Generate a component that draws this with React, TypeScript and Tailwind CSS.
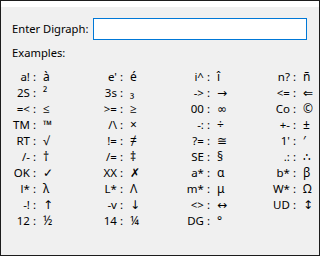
import React from "react";

const items: [string, string][] = [
  ["a!", "à"], ["e'", "é"], ["i^", "î"], ["n?", "ñ"],
  ["2S", "²"], ["3s", "₃"], ["->", "→"], ["<=", "⇐"],
  ["=<", "≤"], [">=", "≥"], ["00", "∞"], ["Co", "©"],
  ["TM", "™"], ["/\\", "×"], ["-:", "÷"], ["+-", "±"],
  ["RT", "√"], ["!=", "≠"], ["?=", "≅"], ["1'", "′"],
  ["/-", "†"], ["/=", "‡"], ["SE", "§"], [".:", "∴"],
  ["OK", "✓"], ["XX", "✗"], ["a*", "α"], ["b*", "β"],
  ["l*", "λ"], ["L*", "Λ"], ["m*", "μ"], ["W*", "Ω"],
  ["-!", "↑"], ["-v", "↓"], ["<>", "↔"], ["UD", "↕"],
  ["12", "½"], ["14", "¼"], ["DG", "°"],
];

const dejavu = new Set(["→", "⇐", "∞", "↑", "↓", "↔", "↕"]);

export default function App() {
  return (
    <div
      className="w-[320px] h-[256px] border border-[#1c1c1c] bg-[#f0f0f0] flex flex-col overflow-hidden text-[11px] text-[#000]"
      style={{ fontFamily: '"Noto Sans", "Open Sans", sans-serif' }}
    >
      <div className="h-[6px] bg-white shrink-0" />
      <div className="flex flex-col pl-[11px] pt-[11px]">
        <div className="flex items-center h-[22px]">
          <div className="w-[81px] leading-[16px] whitespace-nowrap text-[11.2px]">Enter Digraph:</div>
          <div className="w-[214px] h-[22px] border border-[#0078d7] bg-white" />
        </div>
        <div className="mt-[5px] leading-[16px] h-[16px] whitespace-nowrap text-[11.2px]">Examples:</div>
        <div className="mt-[8px] grid grid-cols-[87px_87px_86px_86px]">
          {items.map(([k, v], i) => (
            <div key={i} className="flex h-[16px] leading-[16px] items-center">
              <div className="w-[24px] flex justify-end whitespace-nowrap text-[11.5px]">
                {k}&nbsp;:
              </div>
              <div
                className={
                  dejavu.has(v)
                    ? "pl-[7px] whitespace-nowrap text-[12px] font-['DejaVu_Sans',sans-serif]"
                    : "pl-[7px] whitespace-nowrap text-[12px]"
                }
              >
                {v}
              </div>
            </div>
          ))}
        </div>
      </div>
    </div>
  );
}
